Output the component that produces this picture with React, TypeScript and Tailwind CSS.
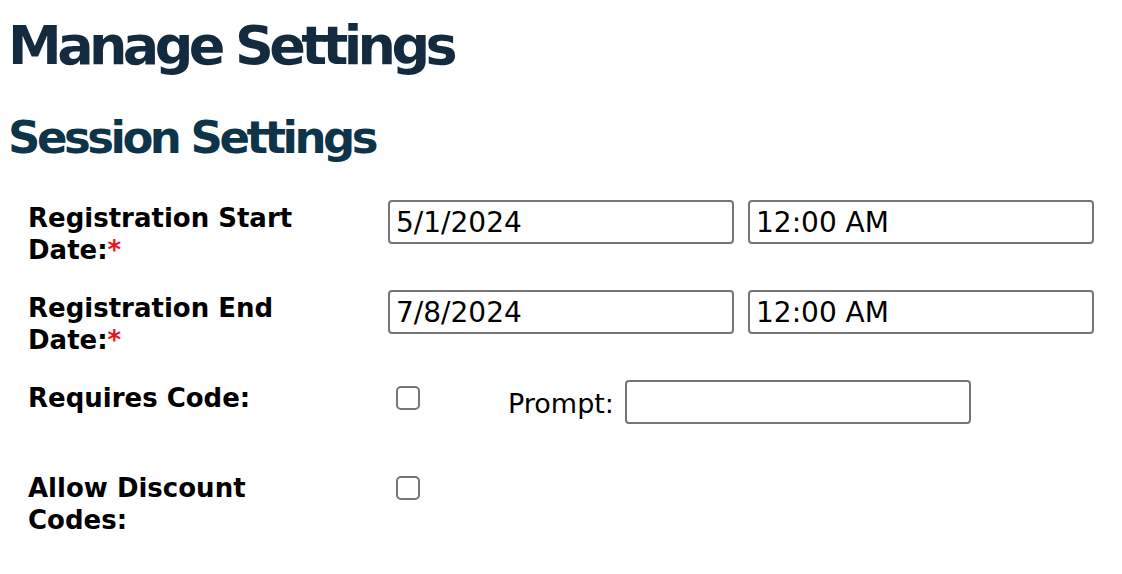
const FONT = "font-['DejaVu_Sans','Verdana',sans-serif]";

function TextBox({ value, className = "" }: { value?: string; className?: string }) {
  return (
    <input
      type="text"
      defaultValue={value}
      className={`h-[44px] w-[346px] rounded-[4px] border-2 border-[#767676] bg-white px-[6px] text-[28px] text-black outline-none ${FONT} ${className}`}
    />
  );
}

function Check() {
  return (
    <input
      type="checkbox"
      className="mt-[6px] ml-[8px] h-[24px] w-[24px] appearance-none rounded-[5px] border-2 border-[#767676] bg-white"
    />
  );
}

function Label({ children, required }: { children: React.ReactNode; required?: boolean }) {
  return (
    <div className="pl-[20px] pr-4 pt-[2px] text-[26px] font-bold leading-[32px] text-black">
      {children}
      {required && <span className="text-[#e8141e]">*</span>}
    </div>
  );
}

export default function App() {
  return (
    <div className={`min-h-screen bg-white px-2 ${FONT}`}>
      <h1 className="pt-[16px] text-[54px] font-bold leading-[60px] tracking-[-4.6px] text-[#142b3f]">
        Manage Settings
      </h1>
      <h2 className="mt-[36px] text-[45px] font-bold leading-[52px] tracking-[-3.5px] text-[#0d3449]">
        Session Settings
      </h2>

      <div className="mt-[36px] grid grid-cols-[380px_1fr] auto-rows-[90px]">
        <Label required>
          Registration Start
          <br />
          Date:
        </Label>
        <div className="flex gap-[14px]">
          <TextBox value="5/1/2024" />
          <TextBox value="12:00 AM" />
        </div>

        <Label required>
          Registration End
          <br />
          Date:
        </Label>
        <div className="flex gap-[14px]">
          <TextBox value="7/8/2024" />
          <TextBox value="12:00 AM" />
        </div>

        <Label>Requires Code:</Label>
        <div className="flex items-start">
          <Check />
          <span className="ml-[88px] mt-[8px] mr-[11px] text-[27px] leading-[32px] text-black">Prompt:</span>
          <TextBox />
        </div>

        <Label>
          Allow Discount
          <br />
          Codes:
        </Label>
        <div className="flex items-start">
          <Check />
        </div>
      </div>
    </div>
  );
}
